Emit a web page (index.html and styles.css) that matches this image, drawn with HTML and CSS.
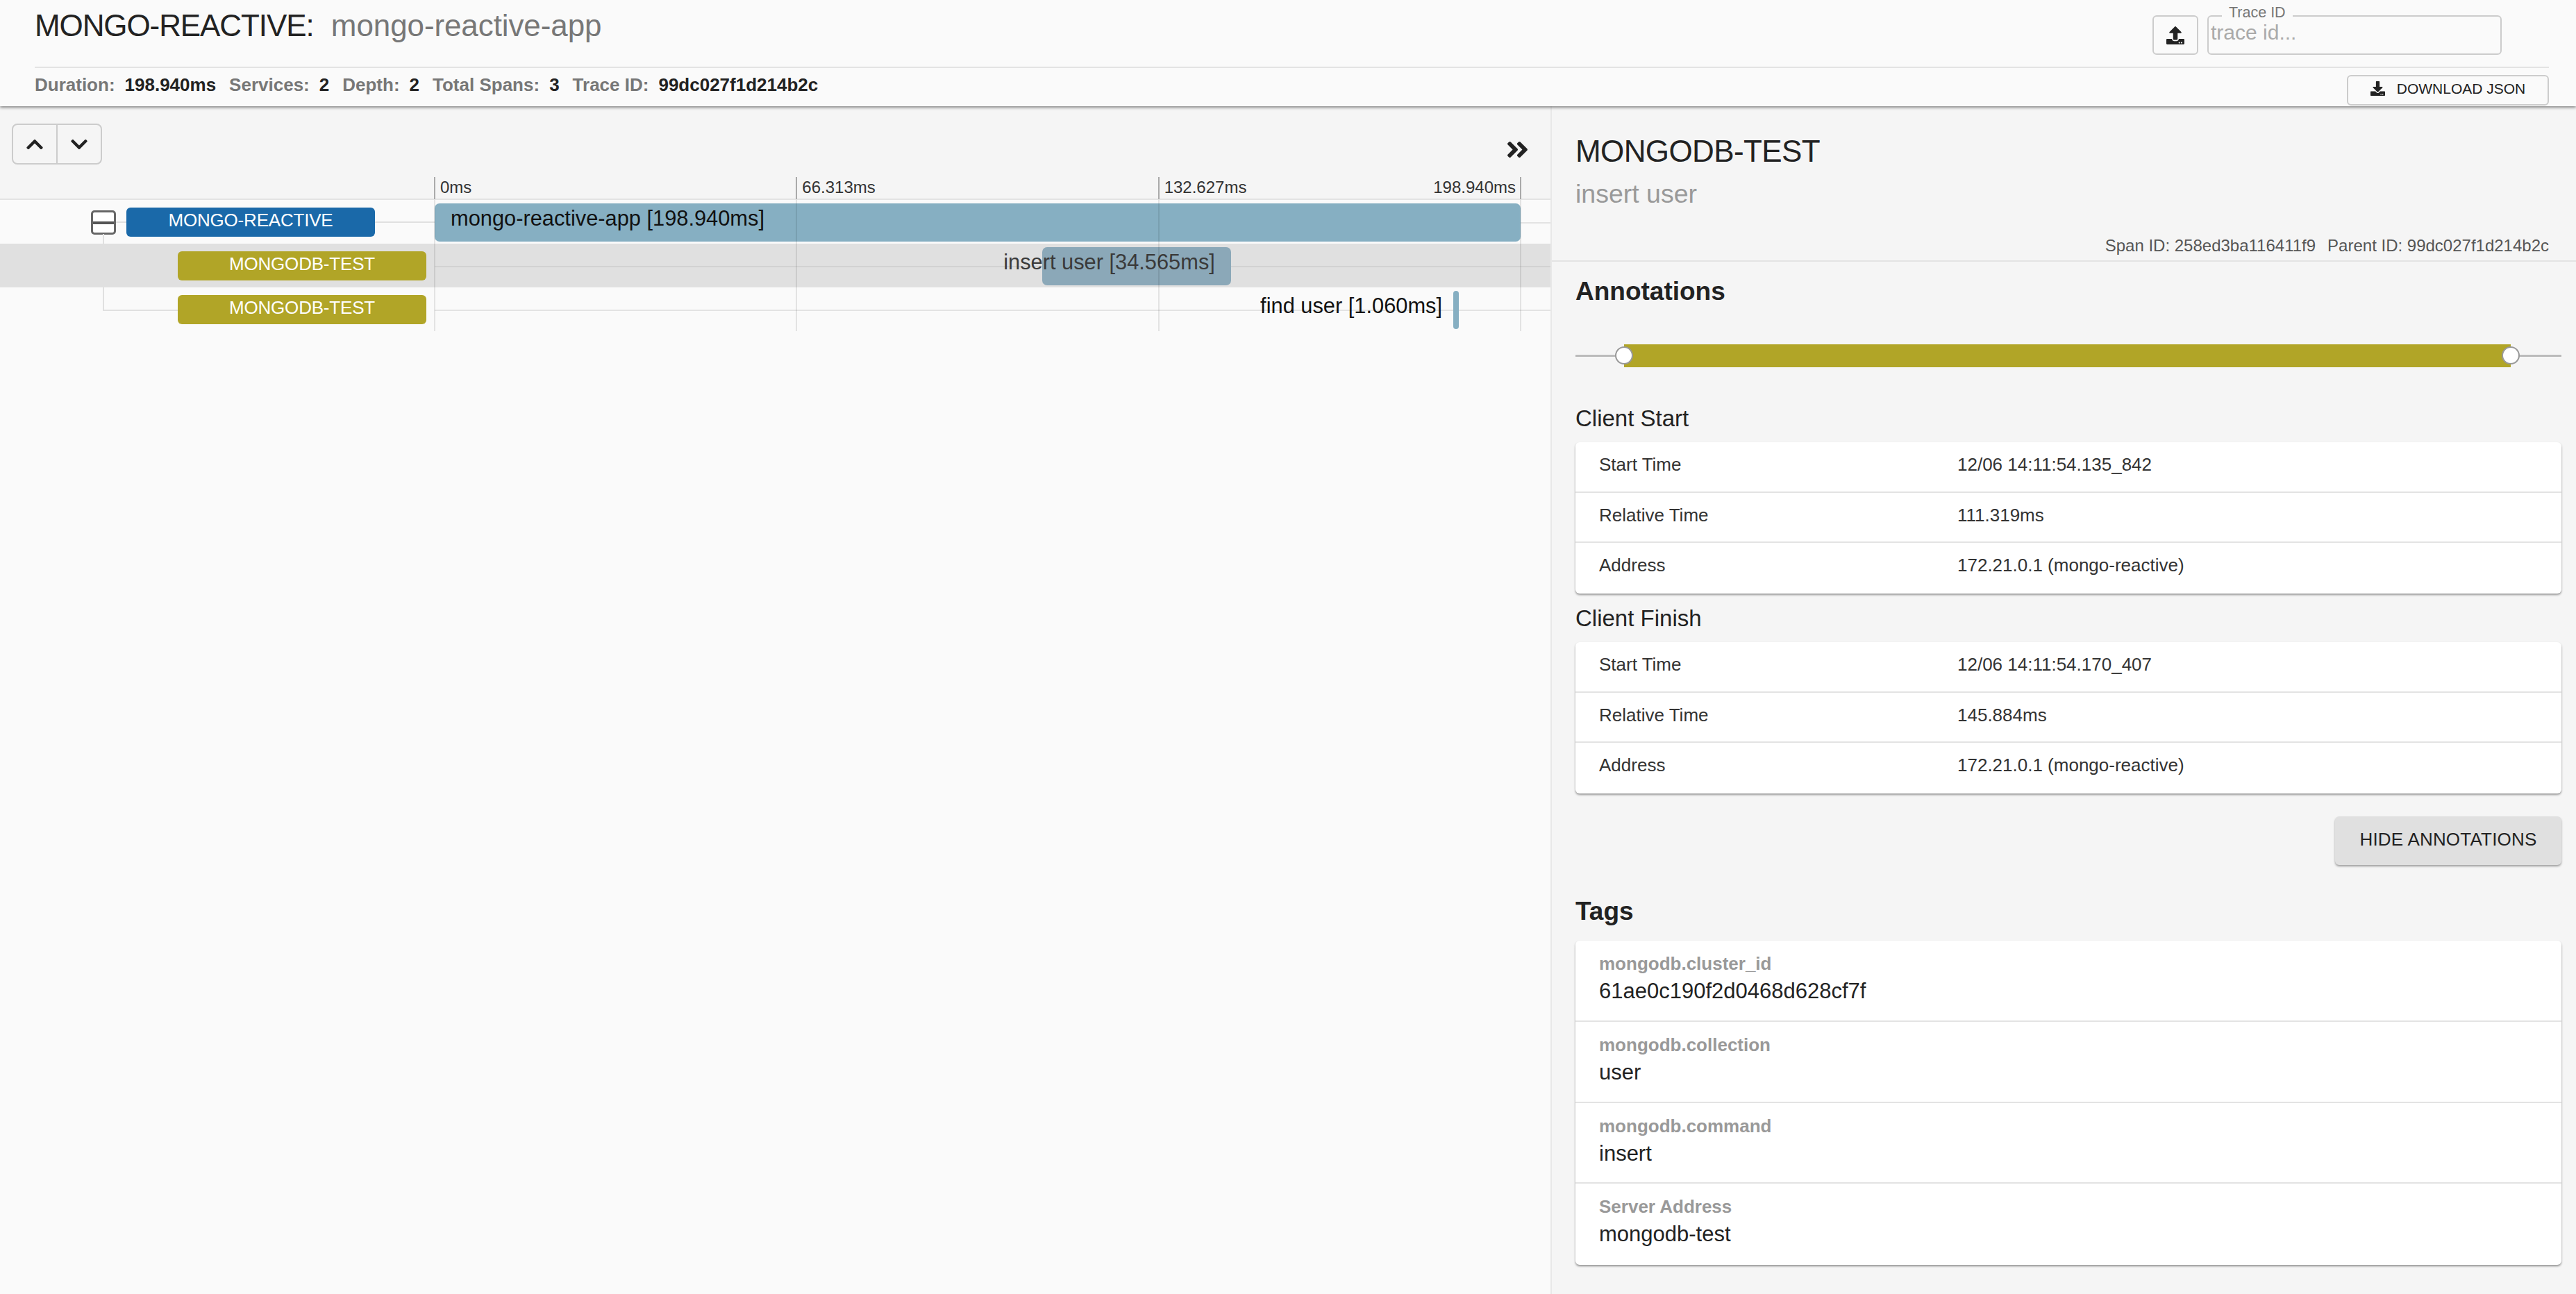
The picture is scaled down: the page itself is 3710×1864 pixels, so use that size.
FILE: index.html
```html
<!DOCTYPE html>
<html lang="en">
<head>
    <meta charset="UTF-8">
    <title>MONGO-REACTIVE: mongo-reactive-app</title>
    <link rel="stylesheet" href="styles.css">
</head>
<body>
<div class="page-header">
    <div class="header-top">
        <h1 class="trace-title"><span class="trace-title-service">MONGO-REACTIVE</span>: <span class="trace-title-name">mongo-reactive-app</span></h1>
        <div class="trace-search">
            <button class="icon-btn upload-btn">
                <svg class="upload-icon" viewBox="0 0 512 512"><path d="M296 384h-80c-13.3 0-24-10.7-24-24V192h-87.7c-17.8 0-26.7-21.5-14.1-34.1L242.3 5.7c7.5-7.5 19.8-7.5 27.3 0l152.2 152.2c12.6 12.6 3.7 34.1-14.1 34.1H320v168c0 13.3-10.7 24-24 24zm216-8v112c0 13.3-10.7 24-24 24H24c-13.3 0-24-10.7-24-24V376c0-13.3 10.7-24 24-24h136v8c0 30.9 25.1 56 56 56h80c30.9 0 56-25.1 56-56v-8h136c13.3 0 24 10.7 24 24zm-124 88c0-11-9-20-20-20s-20 9-20 20 9 20 20 20 20-9 20-20zm64 0c0-11-9-20-20-20s-20 9-20 20 9 20 20 20 20-9 20-20z"/></svg>
            </button>
            <div class="trace-field">
                <div class="trace-legend">Trace ID</div>
                <div class="trace-placeholder">trace id...</div>
            </div>
        </div>
    </div>
    <div class="header-bottom">
        <div class="stats">
            <span class="stat-label">Duration:</span><span class="stat-value">198.940ms</span>
            <span class="stat-label">Services:</span><span class="stat-value">2</span>
            <span class="stat-label">Depth:</span><span class="stat-value">2</span>
            <span class="stat-label">Total Spans:</span><span class="stat-value">3</span>
            <span class="stat-label">Trace ID:</span><span class="stat-value">99dc027f1d214b2c</span>
        </div>
        <button class="download-btn">
            <svg class="download-icon" viewBox="0 0 512 512"><path d="M216 0h80c13.3 0 24 10.7 24 24v168h87.7c17.8 0 26.7 21.5 14.1 34.1L269.7 378.3c-7.5 7.5-19.8 7.5-27.3 0L90.1 226.1c-12.6-12.6-3.7-34.1 14.1-34.1H192V24c0-13.3 10.7-24 24-24zm296 376v112c0 13.3-10.7 24-24 24H24c-13.3 0-24-10.7-24-24V376c0-13.3 10.7-24 24-24h146.7l49 49c20.1 20.1 52.5 20.1 72.6 0l49-49H488c13.3 0 24 10.7 24 24zm-124 88c0-11-9-20-20-20s-20 9-20 20 9 20 20 20 20-9 20-20zm64 0c0-11-9-20-20-20s-20 9-20 20 9 20 20 20 20-9 20-20z"/></svg>
            DOWNLOAD JSON
        </button>
    </div>
</div>

<div class="main">
    <div class="timeline">
        <div class="timeline-head">
            <div class="toolbar">
                <div class="nav-group">
                    <button class="nav-btn">
                        <svg class="chevron" viewBox="0 0 448 512"><path d="M240.971 130.524l194.343 194.343c9.373 9.373 9.373 24.569 0 33.941l-22.667 22.667c-9.357 9.357-24.522 9.375-33.901.04L224 227.495 69.255 381.516c-9.379 9.335-24.544 9.317-33.901-.04l-22.667-22.667c-9.373-9.373-9.373-24.569 0-33.941L207.03 130.525c9.372-9.373 24.568-9.373 33.941-.001z"/></svg>
                    </button>
                    <button class="nav-btn">
                        <svg class="chevron" viewBox="0 0 448 512"><path d="M207.029 381.476L12.686 187.132c-9.373-9.373-9.373-24.569 0-33.941l22.667-22.667c9.357-9.357 24.522-9.375 33.901-.04L224 284.505l154.745-154.021c9.379-9.335 24.544-9.317 33.901.04l22.667 22.667c9.373 9.373 9.373 24.569 0 33.941L240.971 381.476c-9.373 9.372-24.569 9.372-33.942 0z"/></svg>
                    </button>
                </div>
                <svg class="collapse-icon" viewBox="0 0 448 512"><path d="M224.3 273l-136 136c-9.4 9.4-24.6 9.4-33.9 0l-22.6-22.6c-9.4-9.4-9.4-24.6 0-33.9l96.4-96.4-96.4-96.4c-9.4-9.4-9.4-24.6 0-33.9L54.3 103c9.4-9.4 24.6-9.4 33.9 0l136 136c9.5 9.4 9.5 24.6.1 34zm192-34l-136-136c-9.4-9.4-24.6-9.4-33.9 0l-22.6 22.6c-9.4 9.4-9.4 24.6 0 33.9l96.4 96.4-96.4 96.4c-9.4 9.4-9.4 24.6 0 33.9l22.6 22.6c9.4 9.4 24.6 9.4 33.9 0l136-136c9.4-9.2 9.4-24.4 0-33.8z"/></svg>
            </div>
            <div class="ticks">
                <div class="tick">0ms</div>
                <div class="tick">66.313ms</div>
                <div class="tick tick-third">132.627ms</div>
                <div class="tick tick-last"><span class="tick-last-text">198.940ms</span></div>
            </div>
        </div>

        <div class="rows">
            <div class="row">
                <div class="row-label">
                    <div class="row-guide guide-root"></div>
                    <div class="expand-box"><div class="expand-dash"></div></div>
                    <div class="service-tag tag-root">MONGO-REACTIVE</div>
                </div>
                <div class="row-track">
                    <div class="span-bar" style="left: 0; width: 100%;">
                        <span class="span-text text-inside">mongo-reactive-app [198.940ms]</span>
                    </div>
                </div>
            </div>
            <div class="row row-selected">
                <div class="row-label">
                    <div class="service-tag tag-child">MONGODB-TEST</div>
                </div>
                <div class="row-track">
                    <div class="span-bar" style="left: 55.96%; width: 17.37%;">
                        <span class="span-text text-end">insert user [34.565ms]</span>
                    </div>
                </div>
            </div>
            <div class="row">
                <div class="row-label">
                    <div class="row-guide guide-child"></div>
                    <div class="service-tag tag-child">MONGODB-TEST</div>
                </div>
                <div class="row-track">
                    <div class="span-bar" style="left: 93.8%; width: 0.53%;">
                        <span class="span-text text-before">find user [1.060ms]</span>
                    </div>
                </div>
            </div>
            <div class="grid-lines">
                <div class="grid-line"></div>
                <div class="grid-line"></div>
                <div class="grid-line"></div>
                <div class="grid-line"></div>
            </div>
        </div>
    </div>

    <div class="detail">
        <div class="detail-head">
            <div class="detail-service">MONGODB-TEST</div>
            <div class="detail-span">insert user</div>
            <div class="detail-ids">
                <span>Span ID: 258ed3ba116411f9</span>
                <span>Parent ID: 99dc027f1d214b2c</span>
            </div>
        </div>
        <div class="detail-body">
            <h2 class="section-title">Annotations</h2>
            <div class="slider">
                <div class="slider-range">
                    <div class="slider-thumb thumb-start"></div>
                    <div class="slider-thumb thumb-end"></div>
                </div>
            </div>

            <div class="annotation-title">Client Start</div>
            <div class="card">
                <div class="info-row"><div class="info-key">Start Time</div><div>12/06 14:11:54.135_842</div></div>
                <div class="info-row"><div class="info-key">Relative Time</div><div>111.319ms</div></div>
                <div class="info-row"><div class="info-key">Address</div><div>172.21.0.1 (mongo-reactive)</div></div>
            </div>

            <div class="annotation-title annotation-next">Client Finish</div>
            <div class="card">
                <div class="info-row"><div class="info-key">Start Time</div><div>12/06 14:11:54.170_407</div></div>
                <div class="info-row"><div class="info-key">Relative Time</div><div>145.884ms</div></div>
                <div class="info-row"><div class="info-key">Address</div><div>172.21.0.1 (mongo-reactive)</div></div>
            </div>

            <div class="hide-wrap"><button class="hide-btn">HIDE ANNOTATIONS</button></div>

            <h2 class="section-title tags-title">Tags</h2>
            <div class="card tag-card">
                <div class="tag-row"><div class="tag-key">mongodb.cluster_id</div><div class="tag-value">61ae0c190f2d0468d628cf7f</div></div>
                <div class="tag-row"><div class="tag-key">mongodb.collection</div><div class="tag-value">user</div></div>
                <div class="tag-row"><div class="tag-key">mongodb.command</div><div class="tag-value">insert</div></div>
                <div class="tag-row"><div class="tag-key">Server Address</div><div class="tag-value">mongodb-test</div></div>
            </div>
        </div>
    </div>
</div>
</body>
</html>
```

FILE: styles.css
```css
*{
    margin: 0;
    padding: 0;
    box-sizing: border-box;
}
body{
    width: 3710px;
    height: 1864px;
    overflow: hidden;
    background: #f5f5f5;
    color: #222;
    font-family: "Liberation Sans", Arial, sans-serif;
}
button{
    font-family: inherit;
    cursor: pointer;
}

/* header */
.page-header{
    height: 153px;
    padding: 0 39px 0 50px;
    background: #fafafa;
    position: relative;
    z-index: 2;
    box-shadow: 0 2px 4px rgba(0,0,0,0.45);
}
.header-top{
    height: 98px;
    display: flex;
    justify-content: space-between;
    border-bottom: 2px solid #e3e3e3;
}
.trace-title{
    font-size: 44px;
    font-weight: 400;
    line-height: 50px;
    padding-top: 12px;
    color: #222;
}
.trace-title-service{
    letter-spacing: -1.1px;
}
.trace-title-name{
    color: #777;
    letter-spacing: -0.1px;
    margin-left: 12px;
}
.trace-search{
    display: flex;
    gap: 13px;
    padding-right: 68px;
}
.icon-btn{
    background: #fafafa;
    border: 2px solid #ccc;
    border-radius: 6px;
}
.upload-btn{
    width: 66px;
    height: 57px;
    margin-top: 22px;
    display: flex;
    align-items: center;
    justify-content: center;
}
.upload-icon{
    width: 26px;
    height: 26px;
    fill: #222;
}
.trace-field{
    width: 424px;
    height: 57px;
    margin-top: 22px;
    border: 2px solid #ccc;
    border-radius: 6px;
    padding-left: 3px;
    position: relative;
}
.trace-legend{
    position: absolute;
    left: 19px;
    top: -17px;
    padding: 0 10px;
    background: #fafafa;
    font-size: 21.5px;
    line-height: 22px;
    color: #777;
}
.trace-placeholder{
    font-size: 30px;
    line-height: 34px;
    margin-top: 6px;
    color: #aaa;
}
.header-bottom{
    height: 55px;
    display: flex;
    justify-content: space-between;
}
.stats{
    display: flex;
    font-size: 26px;
    font-weight: 700;
    line-height: 30px;
    padding-top: 9px;
}
.stat-label{
    color: #777;
    margin-right: 14px;
}
.stat-value{
    color: #222;
    margin-right: 19px;
}
.download-btn{
    width: 291px;
    height: 44px;
    margin-top: 10px;
    padding-bottom: 5px;
    background: #fafafa;
    border: 2px solid #ccc;
    border-radius: 6px;
    display: flex;
    align-items: center;
    justify-content: center;
    gap: 17px;
    font-size: 21px;
    color: #222;
}
.download-icon{
    width: 21px;
    height: 21px;
    fill: #222;
}

/* timeline */
.main{
    display: flex;
    height: 1711px;
}
.timeline{
    width: 2233px;
    background: #fafafa;
}
.timeline-head{
    height: 135px;
    background: #f5f5f5;
    border-bottom: 2px solid #e3e3e3;
}
.toolbar{
    height: 102px;
    padding: 25px 31px 0 17px;
    display: flex;
    justify-content: space-between;
}
.nav-group{
    width: 130px;
    height: 59px;
    display: flex;
    border: 2px solid #ccc;
    border-radius: 8px;
}
.nav-btn{
    flex: 1;
    background: none;
    border: 0;
    border-right: 2px solid #ccc;
    display: flex;
    align-items: center;
    justify-content: center;
}
.nav-btn:last-child{
    border-right: 0;
}
.chevron{
    width: 24px;
    height: 28px;
    fill: #222;
}
.collapse-icon{
    width: 33px;
    height: 37px;
    margin-top: 19px;
    fill: #222;
}
.ticks{
    width: 1566px;
    height: 31px;
    margin-left: 625px;
    display: grid;
    grid-template-columns: repeat(3, 1fr) 2px;
    font-size: 24px;
    line-height: 29px;
    color: #333;
}
.tick{
    height: 32px;
    padding-left: 7px;
    border-left: 2px solid #aaa;
}
.tick-last{
    padding-left: 0;
    position: relative;
}
.tick-last-text{
    position: absolute;
    right: 8px;
    top: 0;
    white-space: nowrap;
}

.rows{
    position: relative;
}
.row{
    height: 63px;
    display: flex;
    position: relative;
}
.row::after{
    content: "";
    position: absolute;
    left: 626px;
    right: 0;
    top: 32px;
    height: 2px;
    background: #e3e3e3;
}
.row-selected{
    background: #e0e0e0;
}
.row-selected::after{
    background: #d2d2d2;
}
.row-label{
    width: 626px;
    flex-shrink: 0;
    display: flex;
    align-items: center;
    justify-content: flex-end;
    position: relative;
    padding-right: 12px;
}
.service-tag{
    width: 358px;
    height: 42px;
    border-radius: 6px;
    color: #fff;
    font-size: 26px;
    letter-spacing: -0.2px;
    line-height: 36px;
    text-align: center;
    position: relative;
}
.tag-root{
    background: #1a69a9;
    margin-right: 74px;
}
.tag-child{
    background: #b1a527;
}
.row-guide{
    position: absolute;
    border-color: #e0e0e0;
    border-style: solid;
}
.guide-root{
    left: 167px;
    right: 0;
    top: 31px;
    border-width: 2px 0 0;
}
.guide-child{
    left: 148px;
    width: 110px;
    top: -77px;
    height: 111px;
    border-width: 0 0 2px 2px;
}
.expand-box{
    width: 36px;
    height: 35px;
    position: absolute;
    left: 131px;
    top: 15px;
    background: #fff;
    border: 3px solid #666;
    border-radius: 5px;
    display: flex;
    align-items: center;
}
.expand-dash{
    width: 100%;
    height: 4px;
    background: #555;
}
.row-track{
    width: 1564px;
    position: relative;
    z-index: 1;
}
.span-bar{
    position: absolute;
    top: 5px;
    height: 55px;
    background: #86afc2;
    border-radius: 7px;
}
.row-selected .span-bar{
    background: #8ba8b8;
}
.span-text{
    position: absolute;
    top: 4px;
    font-size: 30.8px;
    line-height: 36px;
    white-space: nowrap;
    color: #111;
}
.text-inside{
    left: 23px;
}
.text-end{
    right: 23px;
    color: #3a3a3a;
}
.text-before{
    right: calc(100% + 16px);
}
.grid-lines{
    position: absolute;
    left: 625px;
    top: 0;
    width: 1566px;
    height: 189px;
    z-index: 1;
    display: flex;
    justify-content: space-between;
}
.grid-line{
    width: 2px;
    background: rgba(0,0,0,0.09);
}

/* detail */
.detail{
    flex: 1;
    border-left: 2px solid #e8e8e8;
}
.detail-head{
    height: 224px;
    padding: 40px 39px 0 34px;
    border-bottom: 2px solid #e3e3e3;
}
.detail-service{
    font-size: 44px;
    letter-spacing: -0.6px;
    line-height: 50px;
    color: #222;
}
.detail-span{
    font-size: 37.5px;
    line-height: 44px;
    margin-top: 14px;
    color: #999;
}
.detail-ids{
    margin-top: 39px;
    display: flex;
    justify-content: flex-end;
    gap: 17px;
    font-size: 24px;
    line-height: 28px;
    color: #555;
}
.detail-body{
    padding: 0 21px 0 34px;
}
.section-title{
    font-size: 37px;
    font-weight: 700;
    line-height: 44px;
    margin-top: 21px;
    color: #222;
}
.slider{
    height: 33px;
    margin-top: 54px;
    padding: 0 73px 0 70px;
    position: relative;
}
.slider::before{
    content: "";
    position: absolute;
    left: 0;
    right: 0;
    top: 15px;
    height: 3px;
    background: #bbb;
}
.slider-range{
    height: 33px;
    background: #b1a527;
    position: relative;
}
.slider-thumb{
    width: 26px;
    height: 26px;
    position: absolute;
    top: 3px;
    background: #fff;
    border: 2px solid #999;
    border-radius: 50%;
}
.thumb-start{
    left: -13px;
}
.thumb-end{
    right: -13px;
}
.annotation-title{
    font-size: 33px;
    line-height: 40px;
    margin-top: 54px;
    color: #222;
}
.annotation-next{
    margin-top: 16px;
}
.card{
    margin-top: 14px;
    background: #fff;
    border-radius: 6px;
    box-shadow: 0 2px 3px rgba(0,0,0,0.4);
}
.info-row{
    height: 72.7px;
    padding: 16px 34px 0;
    display: flex;
    font-size: 26px;
    line-height: 32px;
    color: #333;
    border-bottom: 2px solid #e3e3e3;
}
.info-row:last-child{
    border-bottom: 0;
}
.info-key{
    width: 516px;
}
.hide-wrap{
    margin-top: 33px;
    display: flex;
    justify-content: flex-end;
}
.hide-btn{
    width: 326px;
    height: 70px;
    padding-bottom: 4px;
    background: #e0e0e0;
    border: 0;
    border-radius: 6px;
    font-size: 26px;
    letter-spacing: 0.2px;
    color: #222;
    box-shadow: 0 2px 3px rgba(0,0,0,0.35);
}
.tags-title{
    margin-top: 45px;
}
.tag-card{
    margin-top: 20px;
}
.tag-row{
    height: 116.7px;
    padding: 18px 34px 0;
    border-bottom: 2px solid #e3e3e3;
}
.tag-row:last-child{
    border-bottom: 0;
}
.tag-key{
    font-size: 26px;
    font-weight: 700;
    line-height: 30px;
    color: #999;
}
.tag-value{
    font-size: 31px;
    line-height: 36px;
    margin-top: 7px;
    color: #222;
}
```
